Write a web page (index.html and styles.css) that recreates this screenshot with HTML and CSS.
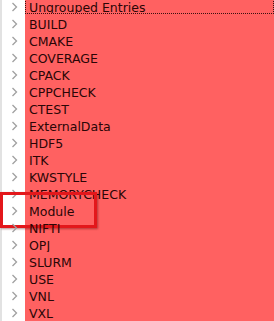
FILE: index.html
```html
<!DOCTYPE html>
<html lang="en">
<head>
    <meta charset="UTF-8">
    <title>Cache Entries</title>
    <link rel="stylesheet" href="styles.css">
</head>
<body>
    <div class="tree">
        <div class="row current"><span class="arrow"><svg width="7" height="10" viewBox="0 0 7 10"><polyline points="1.5,1 5.5,5 1.5,9" /></svg></span><span class="label">Ungrouped Entries</span></div>
        <div class="row"><span class="arrow"><svg width="7" height="10" viewBox="0 0 7 10"><polyline points="1.5,1 5.5,5 1.5,9" /></svg></span><span class="label">BUILD</span></div>
        <div class="row"><span class="arrow"><svg width="7" height="10" viewBox="0 0 7 10"><polyline points="1.5,1 5.5,5 1.5,9" /></svg></span><span class="label">CMAKE</span></div>
        <div class="row"><span class="arrow"><svg width="7" height="10" viewBox="0 0 7 10"><polyline points="1.5,1 5.5,5 1.5,9" /></svg></span><span class="label">COVERAGE</span></div>
        <div class="row"><span class="arrow"><svg width="7" height="10" viewBox="0 0 7 10"><polyline points="1.5,1 5.5,5 1.5,9" /></svg></span><span class="label">CPACK</span></div>
        <div class="row"><span class="arrow"><svg width="7" height="10" viewBox="0 0 7 10"><polyline points="1.5,1 5.5,5 1.5,9" /></svg></span><span class="label">CPPCHECK</span></div>
        <div class="row"><span class="arrow"><svg width="7" height="10" viewBox="0 0 7 10"><polyline points="1.5,1 5.5,5 1.5,9" /></svg></span><span class="label">CTEST</span></div>
        <div class="row"><span class="arrow"><svg width="7" height="10" viewBox="0 0 7 10"><polyline points="1.5,1 5.5,5 1.5,9" /></svg></span><span class="label">ExternalData</span></div>
        <div class="row"><span class="arrow"><svg width="7" height="10" viewBox="0 0 7 10"><polyline points="1.5,1 5.5,5 1.5,9" /></svg></span><span class="label">HDF5</span></div>
        <div class="row"><span class="arrow"><svg width="7" height="10" viewBox="0 0 7 10"><polyline points="1.5,1 5.5,5 1.5,9" /></svg></span><span class="label">ITK</span></div>
        <div class="row"><span class="arrow"><svg width="7" height="10" viewBox="0 0 7 10"><polyline points="1.5,1 5.5,5 1.5,9" /></svg></span><span class="label">KWSTYLE</span></div>
        <div class="row"><span class="arrow"><svg width="7" height="10" viewBox="0 0 7 10"><polyline points="1.5,1 5.5,5 1.5,9" /></svg></span><span class="label">MEMORYCHECK</span></div>
        <div class="row marked"><span class="arrow"><svg width="7" height="10" viewBox="0 0 7 10"><polyline points="1.5,1 5.5,5 1.5,9" /></svg></span><span class="label">Module</span></div>
        <div class="row"><span class="arrow"><svg width="7" height="10" viewBox="0 0 7 10"><polyline points="1.5,1 5.5,5 1.5,9" /></svg></span><span class="label">NIFTI</span></div>
        <div class="row"><span class="arrow"><svg width="7" height="10" viewBox="0 0 7 10"><polyline points="1.5,1 5.5,5 1.5,9" /></svg></span><span class="label">OPJ</span></div>
        <div class="row"><span class="arrow"><svg width="7" height="10" viewBox="0 0 7 10"><polyline points="1.5,1 5.5,5 1.5,9" /></svg></span><span class="label">SLURM</span></div>
        <div class="row"><span class="arrow"><svg width="7" height="10" viewBox="0 0 7 10"><polyline points="1.5,1 5.5,5 1.5,9" /></svg></span><span class="label">USE</span></div>
        <div class="row"><span class="arrow"><svg width="7" height="10" viewBox="0 0 7 10"><polyline points="1.5,1 5.5,5 1.5,9" /></svg></span><span class="label">VNL</span></div>
        <div class="row"><span class="arrow"><svg width="7" height="10" viewBox="0 0 7 10"><polyline points="1.5,1 5.5,5 1.5,9" /></svg></span><span class="label">VXL</span></div>
    </div>
</body>
</html>
```

FILE: styles.css
```css
body {
    margin: 0;
    padding: 0;
    background: #ff6161;
    font-family: "DejaVu Sans", "Segoe UI", Arial, sans-serif;
    font-size: 12.5px;
    overflow: hidden;
}
.tree {
    margin-top: -3px;
    min-height: 340px;
    border-left: 2px solid #e2e2e2;
    background: linear-gradient(to right, #ffffff 23px, #ff6161 23px);
}
.row {
    position: relative;
    display: flex;
    align-items: flex-start;
    height: 17px;
}
.arrow {
    width: 23px;
    height: 17px;
    display: flex;
    align-items: center;
    justify-content: center;
    padding: 3px 0 0 2px;
    box-sizing: border-box;
}
.arrow svg polyline {
    fill: none;
    stroke: #a0a0a0;
    stroke-width: 1.3;
}
.label {
    flex: 1;
    height: 17px;
    box-sizing: border-box;
    padding: 2px 0 0 4px;
    color: #2a0606;
    line-height: 17px;
    white-space: nowrap;
    overflow: hidden;
}
.current .label {
    border: 1px dotted #3a1010;
    border-top: none;
    padding-left: 3px;
}
.marked::after {
    content: "";
    position: absolute;
    left: -2px;
    top: -9px;
    width: 91px;
    height: 30px;
    border: 3px solid #e3171b;
    box-shadow: 1px 1px 2px rgba(90, 0, 0, 0.45);
}
```
